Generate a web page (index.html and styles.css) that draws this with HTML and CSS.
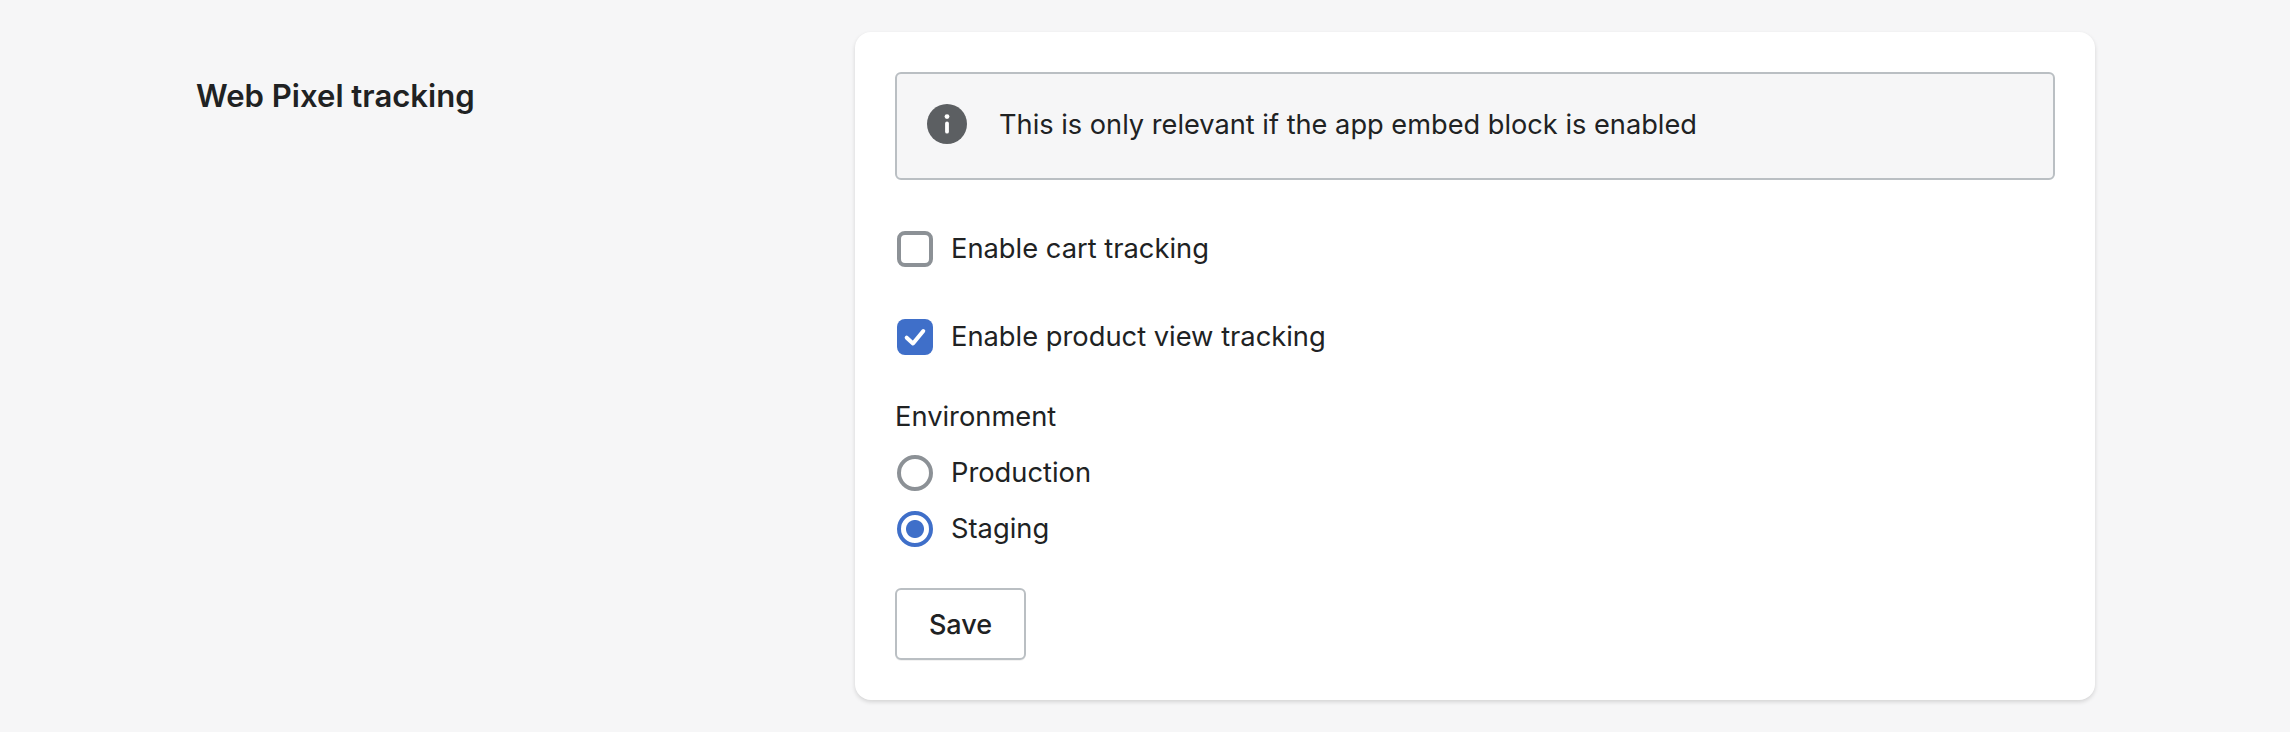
FILE: index.html
```html
<!DOCTYPE html>
<html lang="en">
<head>
    <meta charset="UTF-8">
    <title>Web Pixel tracking</title>
    <link rel="stylesheet" href="styles.css">
</head>
<body>
    <div class="seccion">
        <h2 class="titulo">Web Pixel tracking</h2>

        <div class="tarjeta">
            <div class="aviso">
                <svg class="aviso-icono" viewBox="0 0 40 40">
                    <circle cx="20" cy="20" r="20" fill="#5c5f62"/>
                    <circle cx="20" cy="12.6" r="2.4" fill="#fff"/>
                    <rect x="18.1" y="17.6" width="3.8" height="12" rx="1.9" fill="#fff"/>
                </svg>
                <p>This is only relevant if the app embed block is enabled</p>
            </div>

            <label class="opcion opcion-check">
                <span class="check"></span>
                Enable cart tracking
            </label>
            <label class="opcion opcion-check">
                <span class="check marcado">
                    <svg viewBox="0 0 36 36">
                        <path d="M9.7 18.7L16 24.5L26.3 12" fill="none" stroke="#fff" stroke-width="4" stroke-linecap="round" stroke-linejoin="round"/>
                    </svg>
                </span>
                Enable product view tracking
            </label>

            <p class="etiqueta">Environment</p>
            <label class="opcion opcion-radio">
                <span class="radio"></span>
                Production
            </label>
            <label class="opcion opcion-radio">
                <span class="radio marcado"></span>
                Staging
            </label>

            <button class="btn-guardar">Save</button>
        </div>
    </div>
</body>
</html>
```

FILE: styles.css
```css
body {
    margin: 0;
    height: 732px;
    background: #f6f6f7;
    color: #202223;
    font-family: Inter, "Noto Sans", sans-serif;
    font-size: 27.3px;
    overflow: hidden;
}

.seccion {
    display: grid;
    grid-template-columns: 659px 1240px;
    padding: 32px 0 0 196px;
}

.titulo {
    margin: 44px 0 0;
    font-size: 31.1px;
    font-weight: 600;
    line-height: 40px;
}

/* Tarjeta blanca */
.tarjeta {
    display: flex;
    flex-direction: column;
    align-items: flex-start;
    height: 668px;
    box-sizing: border-box;
    padding: 40px;
    background: #fff;
    border-radius: 16px;
    box-shadow: 0 2px 4px rgba(0, 0, 0, 0.14);
}

/* Aviso */
.aviso {
    display: flex;
    align-items: center;
    gap: 32px;
    width: 100%;
    height: 108px;
    box-sizing: border-box;
    padding: 0 0 4px 30px;
    background: #f6f6f7;
    border: 2px solid #babfc3;
    border-radius: 6px;
}

.aviso p {
    margin: 0;
    font-size: 27.2px;
}

.aviso-icono {
    width: 40px;
    height: 40px;
}

/* Checkbox y radio */
.opcion {
    display: flex;
    align-items: center;
    gap: 18px;
    padding-left: 2px;
    line-height: 36px;
}

.opcion-check {
    margin-top: 52px;
}

.aviso + .opcion-check {
    margin-top: 51px;
}

.opcion-radio {
    margin-top: 20px;
}

.etiqueta + .opcion-radio {
    margin-top: 20px;
}

.check {
    width: 36px;
    height: 36px;
    box-sizing: border-box;
    border: 4px solid #8c9196;
    border-radius: 8px;
}

.check.marcado {
    background: #3f6fc9;
    border: none;
}

.check svg {
    display: block;
    width: 36px;
    height: 36px;
}

.radio {
    width: 36px;
    height: 36px;
    box-sizing: border-box;
    border: 4px solid #8c9196;
    border-radius: 50%;
}

.radio.marcado {
    border-color: #3f6fc9;
    background: radial-gradient(circle, #3f6fc9 0 8.5px, #fff 9.5px);
}

.etiqueta {
    margin: 44px 0 0;
    line-height: 36px;
}

/* Boton guardar */
.btn-guardar {
    margin-top: 41px;
    width: 131px;
    height: 72px;
    background: #fff;
    border: 2px solid #babfc3;
    border-radius: 6px;
    box-shadow: 0 1px 0 rgba(0, 0, 0, 0.05);
    color: #202223;
    font-family: inherit;
    font-size: 27px;
    font-weight: 500;
}
```
